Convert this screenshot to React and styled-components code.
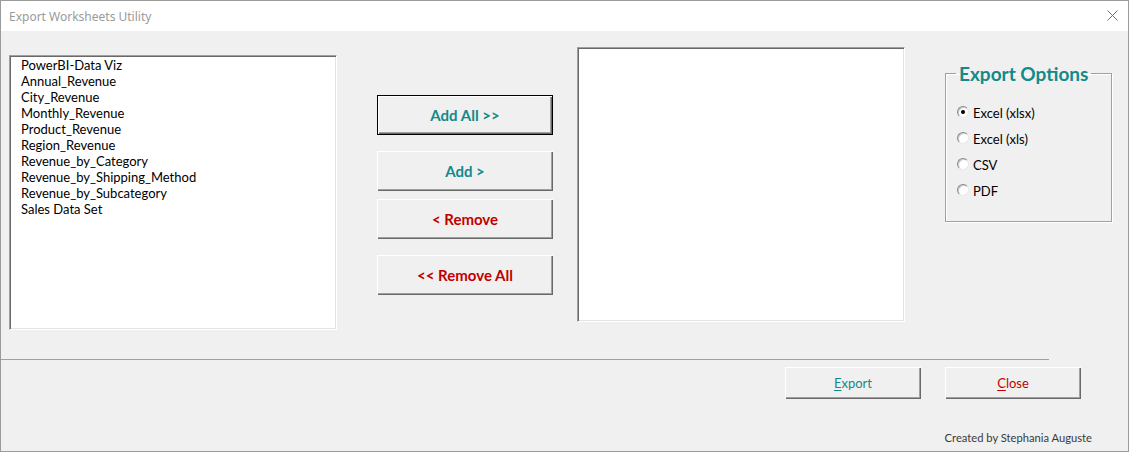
import React, { useState } from 'react';
import styled, { createGlobalStyle } from 'styled-components';

const GlobalStyle = createGlobalStyle`
  html, body {
    margin: 0;
    padding: 0;
    background: #f0f0f0;
  }
  * { box-sizing: border-box; }
`;

const TEAL = '#128a8a';
const RED = '#c00000';

const sheets = [
  'PowerBI-Data Viz',
  'Annual_Revenue',
  'City_Revenue',
  'Monthly_Revenue',
  'Product_Revenue',
  'Region_Revenue',
  'Revenue_by_Category',
  'Revenue_by_Shipping_Method',
  'Revenue_by_Subcategory',
  'Sales Data Set',
];

const formats = ['Excel (xlsx)', 'Excel (xls)', 'CSV', 'PDF'];

const Window = styled.div`
  width: 1129px;
  height: 452px;
  border: 1px solid #9b9b9b;
  background: #f0f0f0;
  display: flex;
  flex-direction: column;
  font-family: Lato, "Liberation Sans", sans-serif;
  overflow: hidden;
`;

const TitleBar = styled.div`
  height: 30px;
  flex: none;
  background: #ffffff;
  display: flex;
  align-items: center;
  justify-content: space-between;
  padding: 0 10px 0 8px;
  font-family: "Noto Sans", "Open Sans", sans-serif;
  font-size: 12px;
  color: #9a9a9a;
`;

const CloseX = styled.svg`
  width: 11px;
  height: 11px;
  margin-top: -1px;
`;

const Main = styled.div`
  height: 328px;
  flex: none;
  display: flex;
  align-items: flex-start;
  padding-left: 8px;
`;

const ListBox = styled.div`
  width: 328px;
  height: 275px;
  margin-top: ${p => p.$top}px;
  margin-left: ${p => p.$left || 0}px;
  background: #ffffff;
  border: 1px solid;
  border-color: #a0a0a0 #ffffff #ffffff #a0a0a0;
  box-shadow: inset 1px 1px #696969, inset -1px -1px #e3e3e3;
  padding: 1px 0 0 11px;
`;

const ListItem = styled.div`
  font-size: 13px;
  line-height: 16px;
  color: #000;
  white-space: nowrap;
`;

const ButtonColumn = styled.div`
  display: flex;
  flex-direction: column;
  margin-left: 40px;
  margin-top: 64px;
`;

const MoveButton = styled.button`
  width: 176px;
  height: 40px;
  margin: ${p => p.$gap || 0}px 0 0 0;
  padding: 0;
  background: #f0f0f0;
  border: ${p => (p.$focused ? '1px solid #000' : 'none')};
  box-shadow: inset 1px 1px #ffffff, inset -1px -1px #696969, inset -2px -2px #a0a0a0;
  font-family: Lato, "Liberation Sans", sans-serif;
  font-weight: 700;
  font-size: 15px;
  color: ${p => p.$color};
  cursor: pointer;
`;

const Frame = styled.fieldset`
  width: 167px;
  height: 160px;
  margin: 31px 0 0 40px;
  padding: 0 10px;
  border: 1px solid #a0a0a0;
  box-shadow: 1px 1px #ffffff, inset 1px 1px #ffffff;
`;

const Legend = styled.legend`
  padding: 2px 3px 0 3px;
  font-size: 19px;
  line-height: 20px;
  font-weight: 700;
  color: ${TEAL};
`;

const RadioList = styled.div`
  display: flex;
  flex-direction: column;
  margin-top: 16px;
  margin-left: 1px;
`;

const RadioRow = styled.label`
  display: flex;
  align-items: center;
  gap: 4px;
  height: 26px;
  font-size: 13px;
  color: #000;
  cursor: pointer;
`;

const RadioDot = styled.span`
  width: 12px;
  height: 12px;
  flex: none;
  border-radius: 50%;
  background: #ffffff;
  border: 1px solid;
  border-color: #8a8a8a #e8e8e8 #e8e8e8 #8a8a8a;
  box-shadow: inset 1px 1px #c8c8c8;
  display: flex;
  align-items: center;
  justify-content: center;
  margin-top: -2px;

  &::after {
    content: '';
    width: 4px;
    height: 4px;
    border-radius: 50%;
    background: ${p => (p.$checked ? '#000' : 'transparent')};
  }
`;

const Separator = styled.div`
  width: 1048px;
  height: 1px;
  flex: none;
  background: #a0a0a0;
`;

const Footer = styled.div`
  display: flex;
  flex-direction: column;
  align-items: flex-end;
`;

const FooterButtons = styled.div`
  display: flex;
  gap: 24px;
  padding: 7px 47px 0 0;
`;

const DialogButton = styled.button`
  width: 136px;
  height: 32px;
  padding: 0;
  background: #f0f0f0;
  border: none;
  box-shadow: inset 1px 1px #ffffff, inset -1px -1px #696969, inset -2px -2px #a0a0a0;
  font-family: Lato, "Liberation Sans", sans-serif;
  font-size: 13px;
  color: ${p => p.$color};
  cursor: pointer;

  & u {
    text-underline-offset: 2px;
  }
`;

const Credits = styled.div`
  margin: 32px 36px 0 0;
  font-size: 11.2px;
  line-height: 14px;
  color: #3a3a3a;
`;

export default function App() {
  const [format, setFormat] = useState(formats[0]);
  return (
    <>
      <GlobalStyle />
      <Window>
        <TitleBar>
          <span>Export Worksheets Utility</span>
          <CloseX viewBox="0 0 11 11">
            <path d="M0.5 0.5 L10.5 10.5 M10.5 0.5 L0.5 10.5" stroke="#707070" strokeWidth="1" fill="none" />
          </CloseX>
        </TitleBar>
        <Main>
          <ListBox $top={24}>
            {sheets.map(name => <ListItem key={name}>{name}</ListItem>)}
          </ListBox>
          <ButtonColumn>
            <MoveButton $color={TEAL} $focused>Add All &gt;&gt;</MoveButton>
            <MoveButton $color={TEAL} $gap={16}>Add &gt;</MoveButton>
            <MoveButton $color={RED} $gap={8}>&lt; Remove</MoveButton>
            <MoveButton $color={RED} $gap={16}>&lt;&lt; Remove All</MoveButton>
          </ButtonColumn>
          <ListBox $top={16} $left={24} />
          <Frame>
            <Legend>Export Options</Legend>
            <RadioList>
              {formats.map(f => (
                <RadioRow key={f} onClick={() => setFormat(f)}>
                  <RadioDot $checked={format === f} />
                  {f}
                </RadioRow>
              ))}
            </RadioList>
          </Frame>
        </Main>
        <Separator />
        <Footer>
          <FooterButtons>
            <DialogButton $color={TEAL}><u>E</u>xport</DialogButton>
            <DialogButton $color={RED}><u>C</u>lose</DialogButton>
          </FooterButtons>
          <Credits>Created by Stephania Auguste</Credits>
        </Footer>
      </Window>
    </>
  );
}
